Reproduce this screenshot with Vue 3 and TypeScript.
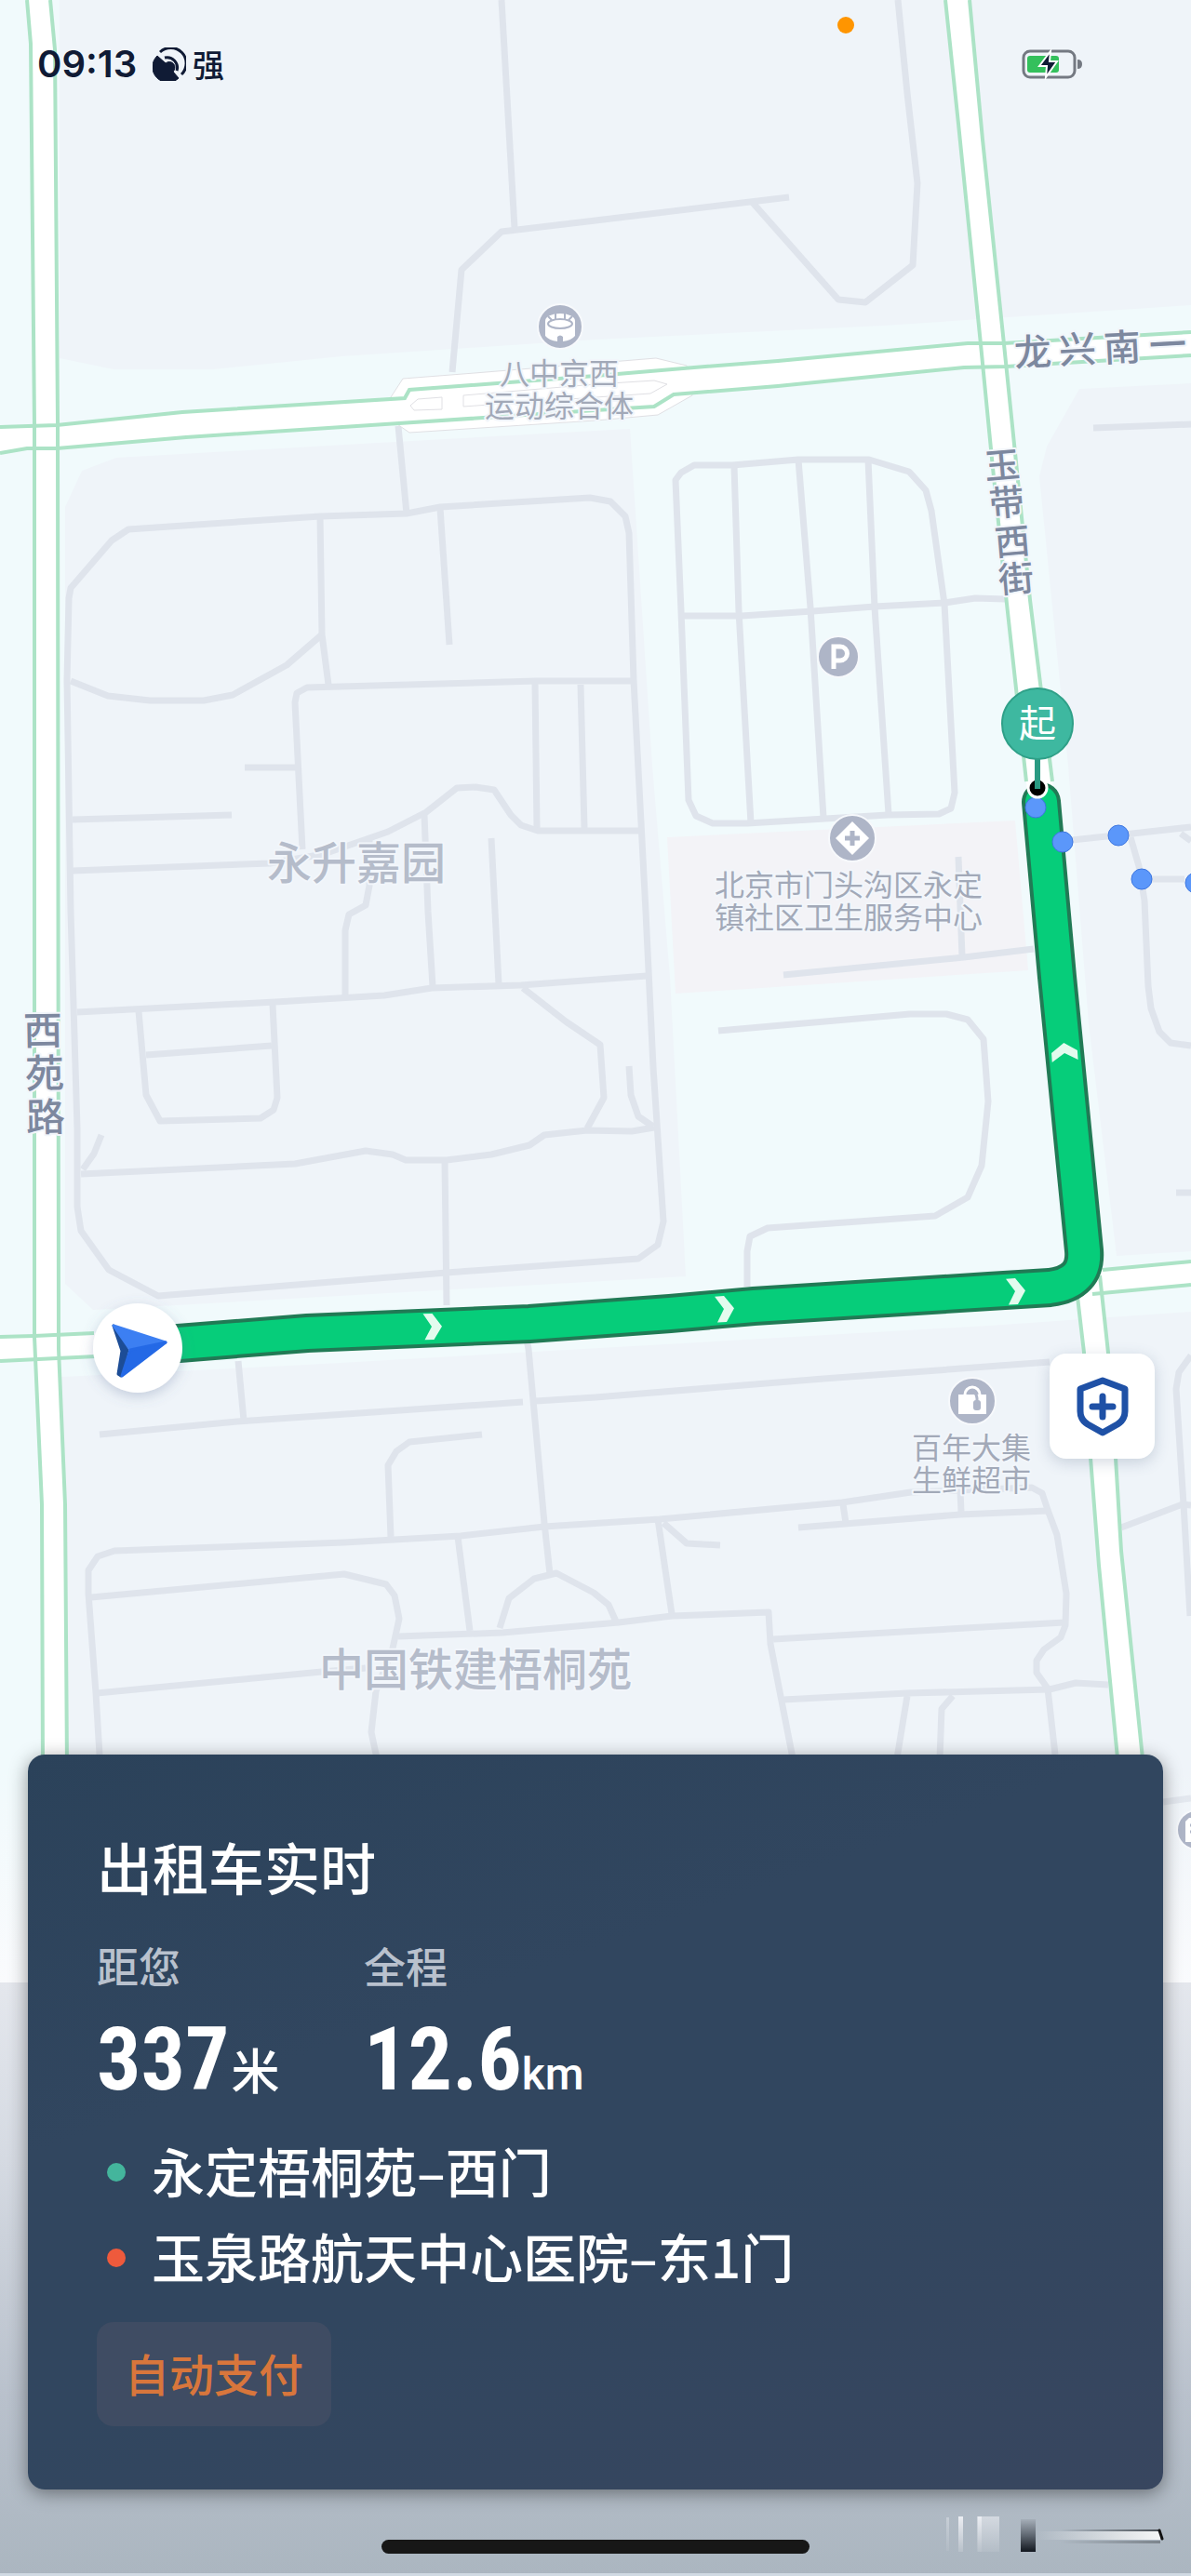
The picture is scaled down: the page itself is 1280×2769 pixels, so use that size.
<script setup lang="ts">
interface Label { x: number; y: number; text: string }
interface PoiLabel { x: number; y: number; lines: string[] }
interface Glyph { x: number; y: number; char: string }

const paths: string[] = [
  'M539 0 553 245',
  'M486 400 496 290 539 249 640 237 848 212',
  'M809 218 901 322 930 325 981 285 986 197 975 100 965 0',
  'M428 458 437 552',
  'M1175 460 1280 456',
  'M74 643 76 632 120 581 138 569 344 555 437 552 473 545 634 535 656 539 672 555 676 573 681 731 694 980 702 1147 713 1313 707 1338 686 1353 480 1368 170 1393 117 1365 87 1323 83 1297 83 1213 79 1080 76 980 72 731Z',
  'M344 555 346 682 353 736',
  'M76 732 116 748 161 753 219 753 250 747 308 715 345 683',
  'M473 546 483 693',
  'M681 732 576 732 330 739 319 745 317 755 325 913',
  'M263 825H319',
  'M575 734 577 890',
  'M624 736 628 890',
  'M78 881 249 876',
  'M78 936 290 928 348 918 417 894 458 873 491 847 511 846 531 849 549 876 560 887 578 893 690 893',
  'M456 875 460 980 465 1060',
  'M528 901 536 1058',
  'M397 903V952L393 973 375 983 371 1000V1072',
  'M83 1088 296 1077 413 1070 464 1062 560 1059 695 1049',
  'M149 1087 157 1177 172 1205 280 1202 294 1193 298 1180 293 1080',
  'M157 1134 292 1124',
  'M562 1062 608 1098 645 1123 649 1180 631 1213',
  'M87 1262 317 1251 393 1237 422 1241 436 1247H480L528 1241 569 1231 585 1220 631 1215 679 1216 703 1212',
  'M109 1220 101 1240 89 1257',
  'M676 1146 678 1177 686 1200 702 1211',
  'M478 1248 480 1403',
  'M726 516 732 508 746 500 787 500 858 494H934L977 507 995 527 1001 549 1015 649 1026 852 1022 869 1009 875 954 876 803 885H766L748 877 740 860 732 657Z',
  'M732 662H797L873 657 940 652 1015 648 1048 643 1081 644',
  'M789 501 794 657 807 885',
  'M858 494 871 653 885 879',
  'M933 494 940 653 955 875',
  'M1030 921 1034 1028',
  'M842 1048 1036 1029 1111 1020',
  'M1152 903 1217 896 1280 889',
  'M1215 900 1224 931 1230 968 1234 1060 1237 1084 1246 1109 1258 1121 1280 1124',
  'M1234 945H1273',
  'M1269 896 1280 904',
  'M772 1108 978 1090H1017L1040 1096 1057 1117 1062 1184 1055 1253 1040 1287 1005 1307 825 1320 806 1329 803 1345V1383',
  'M1264 1282H1280',
  'M256 1463 262 1527',
  'M107 1542 255 1528 562 1507',
  'M576 1506 640 1502 885 1482 1128 1464',
  'M566 1440 568 1450 585 1637 591 1692',
  'M518 1542 440 1550 426 1560 417 1575 420 1652',
  'M107 1886 103 1820 95 1713V1688L105 1673 123 1667 370 1658 495 1651 585 1641 709 1633 905 1615 979 1604 1109 1599 1120 1605 1126 1623 1136 1650 1146 1713 1145 1747 1140 1760 1122 1773 1114 1785V1798L1126 1815 1134 1886',
  'M98 1717 370 1692 415 1703 424 1715 429 1740 422 1772 404 1818 399 1862 405 1890',
  'M104 1820 346 1797 393 1793',
  'M492 1652 505 1753',
  'M537 1750 547 1718 574 1697 598 1691 638 1712 654 1725 662 1743',
  'M428 1759 540 1755 665 1744 722 1737 826 1733 828 1767 852 1890',
  'M707 1633 722 1735',
  'M713 1637 738 1659 774 1661',
  'M858 1642 1032 1628 1126 1624',
  'M906 1617 909 1637',
  'M1032 1603 1033 1625',
  'M831 1762 1144 1744',
  'M842 1827 975 1820 1128 1816 1156 1809 1191 1811',
  'M975 1823 964 1890',
  'M1024 1823 1012 1837 1010 1890',
  'M1205 1642 1271 1617 1280 1618',
  'M1280 1457 1267 1475 1264 1493 1272 1617 1279 1737',
  'M1250 1937 1280 1933',
]

const roadFills: string[] = [
  'M29 0 33 47 37 457V1437L45 1617 46 1900H72L70 1617 63 1450 62 453 59 53 54 0Z',
  'M0 459 61 457 196 443 435 428 440 419 640 404 746 395 836 388 1040 369 1079 369 1280 357V382L1146 390 1081 394 1036 395 836 415 724 424 703 437 640 441 429 455 200 470 61 482 29 482 0 487Z',
  'M1016 0 1030 133 1054 370 1066 493 1082 649 1103 840 1158 1394 1172 1567 1181 1683 1202 1900H1229L1205 1667 1199 1567 1191 1454 1182 1371 1131 840 1107 645 1092 497 1079 370 1056 150 1042 0Z',
  'M0 1437 37 1436 200 1428V1452L62 1460 0 1463Z',
  'M1160 1367 1280 1356V1381L1160 1392Z',
]

const roadEdges: string[] = [
  'M29 0 33 47 37 457V1437L45 1617 46 1900',
  'M54 0 59 53 62 453 63 1450 70 1617 72 1900',
  'M0 459 61 457 196 443 435 428 440 419 640 404 746 395 836 388 1040 369 1079 369 1280 357',
  'M0 487 29 482 61 482 200 470 429 455 640 441 703 437 724 424 836 415 1036 395 1081 394 1146 390 1280 382',
  'M1016 0 1030 133 1054 370 1066 493 1082 649 1103 840',
  'M1042 0 1056 150 1079 370 1092 497 1107 645 1131 840',
  'M1158 1394 1165 1454 1172 1567 1181 1683 1202 1900',
  'M1182 1371 1191 1454 1199 1567 1205 1667 1229 1900',
  'M1185 1365 1280 1356',
  'M1174 1391 1280 1381',
  'M0 1437 37 1436 101 1433',
  'M0 1463 62 1460 103 1458',
]

const routeLine =
  'M150 1448 192 1444 330 1433 569 1423 720 1412 810 1404 1063 1388 1128 1384Q1168 1379 1165 1344L1136 1050 1119 862'

const chevrons: string[] = [
  'translate(465 1426) rotate(-2)',
  'translate(779 1407) rotate(-4)',
  'translate(1092 1388) rotate(-4)',
  'translate(1144 1131) rotate(-94)',
]

const walkDots: [number, number][] = [[1113, 868], [1142, 905], [1202, 898], [1227, 945], [1285, 949]]

const poiLabels: PoiLabel[] = [
  { x: 601, y: 413, lines: ['八中京西', '运动综合体'] },
  { x: 912, y: 963, lines: ['北京市门头沟区永定', '镇社区卫生服务中心'] },
  { x: 1044, y: 1568, lines: ['百年大集', '生鲜超市'] },
]

const areaLabels: Label[] = [
  { x: 383, y: 945, text: '永升嘉园' },
  { x: 511, y: 1812, text: '中国铁建梧桐苑' },
]

const streetNames: { size: number; angle: number; glyphs: Glyph[] }[] = [
  {
    size: 40, angle: -3,
    glyphs: [{ x: 1110, y: 378, char: '龙' }, { x: 1158, y: 375, char: '兴' }, { x: 1206, y: 373, char: '南' }, { x: 1255, y: 370, char: '一' }],
  },
  {
    size: 38, angle: -5,
    glyphs: [{ x: 1077, y: 500, char: '玉' }, { x: 1082, y: 540, char: '带' }, { x: 1088, y: 582, char: '西' }, { x: 1092, y: 622, char: '街' }],
  },
  {
    size: 42, angle: -1,
    glyphs: [{ x: 46, y: 1107, char: '西' }, { x: 48, y: 1153, char: '苑' }, { x: 49, y: 1200, char: '路' }],
  },
]

const stats = [
  { label: '距您', value: '337', unit: '米', latin: false },
  { label: '全程', value: '12.6', unit: 'km', latin: true },
]

const stops = [
  { kind: 'from', name: '永定梧桐苑–西门' },
  { kind: 'to', name: '玉泉路航天中心医院–东1门' },
]
</script>

<template>
  <main class="screen">
    <svg class="map" viewBox="0 0 1280 2769" role="img" aria-label="行程地图">
      <defs>
        <linearGradient id="fog" x1="0" y1="0" x2="0" y2="1">
          <stop offset="0" stop-color="#f8fafc" stop-opacity="0" />
          <stop offset="1" stop-color="#fafbfd" />
        </linearGradient>
        <linearGradient id="floor" x1="0" y1="0" x2="0" y2="1">
          <stop offset="0" stop-color="#e4e7ed" />
          <stop offset="0.3" stop-color="#d5dae2" />
          <stop offset="0.7" stop-color="#b9c1cc" />
          <stop offset="1" stop-color="#abb6c0" />
        </linearGradient>
        <linearGradient id="bar-light" x1="0" y1="0" x2="0" y2="1">
          <stop offset="0" stop-color="#eceef3" />
          <stop offset="1" stop-color="#b8c1ca" />
        </linearGradient>
        <linearGradient id="bar-dark" x1="0" y1="0" x2="0" y2="1">
          <stop offset="0" stop-color="#a5aeb8" />
          <stop offset="0.5" stop-color="#5f6771" />
          <stop offset="1" stop-color="#12171f" />
        </linearGradient>
        <linearGradient id="streak" x1="0" y1="0" x2="1" y2="0">
          <stop offset="0" stop-color="#f5f6f6" stop-opacity="0" />
          <stop offset="1" stop-color="#f5f6f6" />
        </linearGradient>
        <linearGradient id="streak-edge" x1="0" y1="0" x2="1" y2="0">
          <stop offset="0.2" stop-color="#4b5157" stop-opacity="0" />
          <stop offset="1" stop-color="#4b5157" />
        </linearGradient>
        <filter id="soft" x="-30%" y="-30%" width="160%" height="160%">
          <feDropShadow dx="0" dy="4" stdDeviation="7" flood-color="#5a6f96" flood-opacity="0.3" />
        </filter>
      </defs>

      <rect width="1280" height="2769" fill="#f1fafc" />
      <path class="block" d="M64 0H1280V328L950 350 640 365 367 383 229 397H122L64 385Z" />
      <path class="block" d="M70 545 88 506 125 492 424 475 677 461 701 823 720 1050 737 1372 100 1408 70 1380Z" />
      <path class="block" d="M1160 418 1280 412V1345L1200 1350 1170 1100 1148 823 1117 512 1125 480Z" />
      <path class="block" d="M66 1480 330 1467 1063 1425 1280 1410V2131H66Z" />
      <path d="M717 900 1091 882 1105 1043 726 1068Z" fill="#f3f3f7" />

      <path v-for="d in paths" :key="d" class="path" :d="d" />

      <path class="flare" d="M420 427 433 407 510 401 705 385 738 393 744 425 707 446 640 452 440 465 427 456Z" />
      <path v-for="d in roadFills" :key="d" :d="d" fill="#fff" />
      <path v-for="d in roadEdges" :key="d" class="edge" :d="d" />
      <path class="flare" d="M441 436 449 429 475 427V440L445 441Z" />
      <path class="flare" d="M498 425 640 413 703 409 717 413 699 423 640 427 498 437Z" />

      <rect y="1900" width="1280" height="231" fill="url(#fog)" />
      <rect y="2131" width="1280" height="635" fill="url(#floor)" />
      <rect y="2766" width="1280" height="3" fill="#d0dae3" />
      <rect x="1017" y="2706" width="3" height="36" fill="url(#bar-light)" opacity="0.4" />
      <rect x="1030" y="2705" width="5" height="38" fill="url(#bar-light)" />
      <rect x="1050" y="2705" width="24" height="38" fill="url(#bar-light)" opacity="0.6" />
      <rect x="1051" y="2705" width="4" height="38" fill="url(#bar-light)" />
      <rect x="1097" y="2708" width="16" height="35" fill="url(#bar-dark)" />
      <rect x="1113" y="2719" width="134" height="2" fill="url(#streak-edge)" />
      <rect x="1113" y="2721" width="134" height="9" fill="url(#streak)" />
      <rect x="1113" y="2731" width="134" height="3" fill="url(#streak-edge)" opacity="0.5" />
      <path d="M1246 2720 1249 2729" stroke="#111" stroke-width="3" stroke-linecap="round" />

      <text v-for="l in areaLabels" :key="l.text" class="area" :x="l.x" :y="l.y">{{ l.text }}</text>
      <text v-for="l in poiLabels" :key="l.lines[0]" class="poi" :y="l.y">
        <tspan v-for="(line, i) in l.lines" :key="line" :x="l.x" :dy="i * 35">{{ line }}</tspan>
      </text>
      <template v-for="s in streetNames" :key="s.size">
        <text
          v-for="g in s.glyphs" :key="g.char" class="street" :font-size="s.size"
          :transform="`translate(${g.x} ${g.y}) rotate(${s.angle})`" :y="Math.round(s.size * 0.38)"
        >{{ g.char }}</text>
      </template>

      <g transform="translate(602 351)">
        <circle class="badge" r="24" />
        <path d="M-16-6V10Q-12 15-3 16V11Q0 8 3 11V16Q12 15 16 10V-6Z" fill="#fff" />
        <ellipse cy="-6" rx="16" ry="8" fill="#fff" />
        <ellipse cy="-3" rx="13" ry="5" fill="#fff" stroke="#aeb5c7" stroke-width="2" />
        <path d="M-5-14V-8M5-14V-8M-13-11-9-7M13-11 9-7" stroke="#aeb5c7" stroke-width="2" />
      </g>
      <g transform="translate(901 706)">
        <circle class="badge" r="22" />
        <path d="M-5 13V-11H2A7 7 0 0 1 2 4H-5" fill="none" stroke="#fff" stroke-width="5" />
      </g>
      <g transform="translate(916 901)">
        <circle class="badge" r="25" />
        <path d="M0-18 18 0 0 18-18 0Z" fill="#fff" />
        <path d="M0-8V8M-8 0H8" stroke="#aeb5c7" stroke-width="5" />
      </g>
      <g transform="translate(1045 1506)">
        <circle class="badge" r="25" />
        <path d="M-15-7H15V14H-15Z" fill="#fff" />
        <path d="M-8-6V-7A8 8 0 0 1 8-7" fill="none" stroke="#fff" stroke-width="3" />
        <path d="M-4-8Q4-12 5-3V2" fill="none" stroke="#aeb5c7" stroke-width="3" />
        <rect x="1" y="-1" width="8" height="11" rx="3" fill="#aeb5c7" />
      </g>
      <g transform="translate(1286 1967)">
        <circle class="badge" r="21" />
        <path d="M-12 13V-9L-8-13H8V13Z" fill="#fff" />
        <path d="M-7-5H4M-7 2H4" stroke="#aeb5c7" stroke-width="3" />
      </g>

      <path class="route-case" :d="routeLine" />
      <path class="route" :d="routeLine" />
      <path v-for="c in chevrons" :key="c" :transform="c" d="M-10-14H0L10 0 1 14H-9L-1 0Z" fill="#e3fbee" />
      <circle v-for="[x, y] in walkDots" :key="x" :cx="x" :cy="y" r="11" fill="#5b97fa" stroke="#3d76e0" stroke-width="1" />

      <circle cx="1115" cy="847" r="10" fill="#000" stroke="#fff" stroke-width="3" />
      <path d="M1115 815V848" stroke="#2a9a82" stroke-width="6" />
      <circle cx="1115" cy="778" r="38" fill="#3eb8a0" stroke="#2fa088" stroke-width="2" />
      <text class="pin" x="1115" y="792">起</text>

      <g filter="url(#soft)"><circle cx="148" cy="1449" r="48" fill="#fff" /></g>
      <g stroke-linejoin="round" stroke-width="3">
        <path d="M122 1425 137 1451 130 1479 127 1477 131 1452Z" fill="#1d4d96" stroke="#1d4d96" />
        <path d="M122 1425 178 1443 140 1451Z" fill="#3c7ff2" stroke="#3c7ff2" />
        <path d="M140 1451 178 1443 131 1479Z" fill="#2469e6" stroke="#2469e6" />
      </g>
    </svg>

    <header class="status">
      <span class="clock">09:13</span>
      <svg class="signal" viewBox="0 0 36 36" aria-hidden="true">
        <path d="M5 9A16 16 0 0 0 28 33L22 26A6 6 0 0 0 14 17Z" fill="#101b35" stroke="#101b35" stroke-linejoin="round" />
        <path d="M8 5A16 16 0 0 1 31 29M13 11A11 11 0 0 1 26 25" fill="none" stroke="#101b35" stroke-width="3" />
      </svg>
      <span class="strength">强</span>
      <i class="mic"></i>
      <svg class="battery" viewBox="0 0 66 34" aria-label="充电中">
        <rect x="2" y="3" width="55" height="28" rx="7" fill="none" stroke="#747982" stroke-width="3" />
        <rect x="6" y="8" width="34" height="18" rx="3" fill="#34c05c" />
        <path d="M60 12Q65 12 65 17T60 22Z" fill="#747982" />
        <path d="M31 3 19 19H27L26 31 38 14H30Z" fill="#101b35" stroke="#fff" stroke-width="2" />
      </svg>
    </header>

    <button class="safety" type="button" aria-label="安全中心">
      <svg viewBox="0 0 60 68" aria-hidden="true">
        <path d="M30 6 54 15V39Q54 48 46 53L30 62 14 53Q6 48 6 39V15Z" />
        <path d="M30 23V45M19 34H41" />
      </svg>
    </button>

    <section class="card">
      <h1>出租车实时</h1>
      <dl class="stats">
        <div v-for="s in stats" :key="s.label" class="stat">
          <dt>{{ s.label }}</dt>
          <dd><b>{{ s.value }}</b><span :class="{ latin: s.latin }">{{ s.unit }}</span></dd>
        </div>
      </dl>
      <ul class="stops">
        <li v-for="s in stops" :key="s.kind" :class="s.kind">{{ s.name }}</li>
      </ul>
      <span class="tag">自动支付</span>
    </section>
    <div class="home"></div>
  </main>
</template>

<style>
body {
  margin: 0;
}
</style>

<style scoped>
.screen {
  position: relative;
  display: flex;
  flex-direction: column;
  min-height: 100vh;
  overflow: hidden;
  background: #abb6c0;
  font-family: Roboto, "Noto Sans CJK SC", sans-serif;
}
.map {
  position: absolute;
  top: 0;
  left: 0;
  width: 100%;
}
.map text {
  font-family: "Noto Sans CJK SC", sans-serif;
  text-anchor: middle;
  paint-order: stroke;
  stroke: #f2f6fb;
  stroke-width: 4px;
  stroke-linejoin: round;
}
.block {
  fill: #eff4f9;
}
.path {
  fill: none;
  stroke: #dfe4ec;
  stroke-width: 7;
  stroke-linejoin: round;
}
.edge {
  fill: none;
  stroke: #ace3c6;
  stroke-width: 4;
}
.flare {
  fill: #fff;
  stroke: #e0e0e4;
  stroke-width: 1;
}
.badge {
  fill: #aeb5c7;
  stroke: #f7f9fc;
  stroke-width: 2;
}
.poi {
  font-size: 32px;
  fill: #a2a9b8;
}
.area {
  font-size: 48px;
  font-weight: 500;
  fill: #b5bcca;
}
.street {
  font-weight: 500;
  fill: #7d889f;
}
.map .pin {
  font-size: 40px;
  fill: #fff;
  stroke: none;
}
.route-case {
  fill: none;
  stroke: #217a55;
  stroke-width: 42;
  stroke-linecap: round;
}
.route {
  fill: none;
  stroke: #06cd7a;
  stroke-width: 34;
  stroke-linecap: round;
}
.status {
  position: relative;
  display: flex;
  align-items: center;
  height: 138px;
  padding: 0 116px 0 40px;
  color: #101b35;
}
.clock {
  font: 600 40px/44px Inter, sans-serif;
}
.signal {
  width: 36px;
  height: 36px;
  margin-left: 17px;
}
.strength {
  margin-left: 7px;
  font: 500 34px/44px "Noto Sans CJK SC", sans-serif;
}
.mic {
  position: absolute;
  top: 18px;
  left: 71%;
  width: 18px;
  height: 18px;
  margin-left: -9px;
  border-radius: 50%;
  background: #ff9500;
}
.battery {
  width: 66px;
  height: 34px;
  margin-left: auto;
}
.safety {
  position: absolute;
  right: 39px;
  bottom: 1201px;
  display: grid;
  place-items: center;
  width: 113px;
  height: 113px;
  padding: 0;
  border: 0;
  border-radius: 18px;
  background: #fff;
  box-shadow: 0 4px 16px rgba(60, 80, 120, 0.22);
}
.safety svg {
  width: 60px;
  height: 68px;
  fill: none;
  stroke: #1f51a6;
  stroke-width: 7;
  stroke-linecap: round;
  stroke-linejoin: round;
}
.card {
  position: relative;
  margin: auto 30px 0;
  padding: 84px 74px 68px;
  border-radius: 18px;
  background: linear-gradient(160deg, #2b425a 0%, #31465f 35%, #31465f 60%, #38465f 100%);
  box-shadow: 0 4px 20px rgba(0, 0, 0, 0.42);
  color: #fff;
}
.card h1 {
  margin: 0 0 44px;
  font: 500 60px/72px "Noto Sans CJK SC", sans-serif;
}
.stats {
  display: flex;
  margin: 0 0 24px;
}
.stat {
  min-width: 287px;
}
.stat dt {
  margin-bottom: 12px;
  color: #b9c1cd;
  font: 500 45px/54px "Noto Sans CJK SC", sans-serif;
}
.stat dd {
  display: flex;
  align-items: baseline;
  height: 116px;
  margin: 0;
}
.stat b {
  font: 700 94px/124px "Liberation Sans Narrow", "Roboto Condensed", "Noto Sans CJK SC", sans-serif;
}
.stat dd span {
  margin-left: 2px;
  font: 500 52px/124px "Noto Sans CJK SC", sans-serif;
}
.stat dd .latin {
  margin: 0;
  font-family: Roboto, sans-serif;
  font-size: 48px;
}
.stops {
  display: grid;
  gap: 12px;
  margin: 0 0 32px;
  padding: 0;
  list-style: none;
  font: 500 57px/80px "Noto Sans CJK SC", sans-serif;
}
.stops li {
  display: flex;
  align-items: center;
  gap: 28px;
  padding-left: 11px;
}
.stops li::before {
  width: 20px;
  height: 20px;
  margin-top: 6px;
  border-radius: 50%;
  content: "";
}
.from::before {
  background: #44b59c;
}
.to::before {
  background: #ee5a3c;
}
.tag {
  display: inline-block;
  padding: 0 30px 4px;
  border-radius: 18px;
  background: #3f4c63;
  color: #d8763c;
  font: 500 48px/108px "Noto Sans CJK SC", sans-serif;
  vertical-align: top;
}
.home {
  position: relative;
  align-self: center;
  width: 36%;
  height: 15px;
  margin: 54px 0 24px;
  border-radius: 8px;
  background: #171717;
}
</style>
